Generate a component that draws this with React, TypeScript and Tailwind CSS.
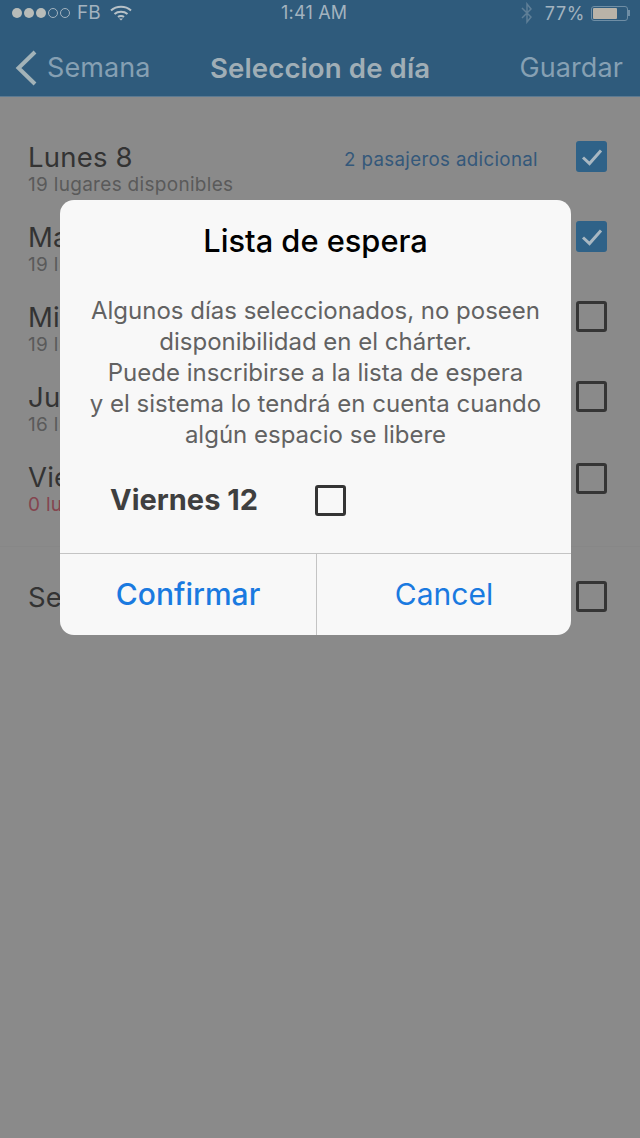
const sans = "font-['Inter','Liberation_Sans',sans-serif]";

function Box({ checked = false, className = "" }: { checked?: boolean; className?: string }) {
  return checked ? (
    <div className={`w-[31px] h-[31px] rounded-[3px] bg-[#2f6288] flex items-center justify-center ${className}`}>
      <svg width="24" height="20" viewBox="0 0 24 20" fill="none">
        <path d="M3 10.5 L9.5 16.5 L21 3.5" stroke="#a9b8c2" strokeWidth="3" />
      </svg>
    </div>
  ) : (
    <div className={`w-[31px] h-[31px] rounded-[3px] border-[3px] border-[#353535] ${className}`} />
  );
}

function Row({
  title,
  sub,
  extra,
  checked,
  red,
}: {
  title: string;
  sub: string;
  extra?: string;
  checked?: boolean;
  red?: boolean;
}) {
  return (
    <div className="h-20 flex items-start pl-7 pr-[33px]">
      <div className="flex-1 min-w-0">
        <div className="text-[27.5px] leading-[32px] text-[#333333] tracking-[0.2px]">{title}</div>
        <div className={`text-[19px] leading-[22px] tracking-[0.3px] mt-[1px] ${red ? "text-[#84454f]" : "text-[#5a5a5a]"}`}>{sub}</div>
      </div>
      {extra && <div className="text-[18.7px] leading-[32px] mt-[3px] mr-[38px] tracking-[0.35px] text-[#34587a]">{extra}</div>}
      <Box checked={checked} className={red ? "mt-[2px]" : ""} />
    </div>
  );
}

export default function App() {
  return (
    <div className={`relative w-[640px] h-[1138px] overflow-hidden bg-[#8a8a8a] ${sans}`}>
      <header className="h-[97px] bg-[#2f5b7c] border-b border-[#5c7a92]">
        <div className="h-[26px] relative flex items-center justify-between pl-[12px] pr-[10px] text-[#a3b3bf] text-[18px]">
          <div className="flex items-center">
            <div className="flex gap-[2px] items-center">
              <span className="w-[10px] h-[10px] rounded-full bg-[#b8bcb9]" />
              <span className="w-[10px] h-[10px] rounded-full bg-[#b8bcb9]" />
              <span className="w-[10px] h-[10px] rounded-full bg-[#b8bcb9]" />
              <span className="w-[10px] h-[10px] rounded-full border border-[#a3b3bf]" />
              <span className="w-[10px] h-[10px] rounded-full border border-[#a3b3bf]" />
            </div>
            <span className="ml-[7px] text-[19px]">FB</span>
            <svg className="ml-[9px]" width="22" height="16" viewBox="0 0 22 16" fill="none" stroke="#b8c2c8" strokeWidth="2">
              <path d="M1 5.5 C6.5 0.5 15.5 0.5 21 5.5" />
              <path d="M4.5 9 C8 6 14 6 17.5 9" />
              <path d="M8 12 C9.5 10.8 12.5 10.8 14 12" />
              <path d="M11 15.5 L9 13.5 H13 Z" fill="#b8c2c8" stroke="none" />
            </svg>
          </div>
          <span className="absolute left-[281px] top-[1px] text-[18px] leading-[24px] tracking-[0.2px]">1:41 AM</span>
          <div className="flex items-center">
            <svg width="12" height="22" viewBox="0 0 12 22" fill="none" stroke="#5f7f97" strokeWidth="1.5">
              <path d="M1 6 L10 15 L6 20 V2 L10 7 L1 16" />
            </svg>
            <span className="ml-[12px] text-[18px] tracking-[0.6px]">77%</span>
            <div className="ml-[6px] w-[37px] h-[15px] rounded-[3px] border border-[#6f8ea5] p-[1px]">
              <div className="w-[24px] h-full rounded-[1px] bg-[#b9b3a8]" />
            </div>
            <div className="w-[2px] h-[6px] bg-[#6f8ea5]" />
          </div>
        </div>
        <div className="h-[70px] pt-[14px] relative flex items-center justify-between pl-[15px] pr-[17px] text-[27px]">
          <div className="flex items-center">
            <svg width="22" height="36" viewBox="0 0 22 36" fill="none" stroke="#a3b3b8" strokeWidth="4">
              <path d="M20 2 L3.5 18 L20 34" />
            </svg>
            <span className="ml-[10px] text-[#86a0b3] tracking-[0.1px]">Semana</span>
          </div>
          <span className="absolute left-[210px] top-[26px] leading-[32px] text-[27.6px] font-semibold text-[#a0aeb6] tracking-[0.1px]">Seleccion de día</span>
          <span className="text-[#86a0b3] tracking-[0.1px]">Guardar</span>
        </div>
      </header>

      <main className="pt-[44px]">
        <Row title="Lunes 8" sub="19 lugares disponibles" extra="2 pasajeros adicional" checked />
        <Row title="Martes 9" sub="19 lugares disponibles" checked />
        <Row title="Miércoles 10" sub="19 lugares disponibles" />
        <Row title="Jueves 11" sub="16 lugares disponibles" />
        <Row title="Viernes 12" sub="0 lugares disponibles" red />
        <div className="h-px bg-[#878787] mt-[5px] mb-[34px]" />
        <Row title="Semana completa" sub="" />
      </main>

      <div className="absolute left-[60px] top-[200px] w-[511px] h-[435px] rounded-[14px] bg-[#f8f8f8] flex flex-col overflow-hidden">
        <h1 className="mt-[20px] text-center text-[30.8px] leading-[42px] font-medium text-black">Lista de espera</h1>
        <p className="mt-[33px] text-center text-[24px] leading-[31px] text-[#626262]">
          Algunos días seleccionados, no poseen
          <br />
          disponibilidad en el chárter.
          <br />
          Puede inscribirse a la lista de espera
          <br />
          y el sistema lo tendrá en cuenta cuando
          <br />
          algún espacio se libere
        </p>
        <div className="flex-1 flex items-center pl-[50px] pb-[3px]">
          <span className="w-[205px] text-[29px] font-bold text-[#3f3f3f]">Viernes 12</span>
          <Box />
        </div>
        <div className="h-[82px] flex border-t border-[#c4c4c4] text-[30px] text-[#1a7ae0]">
          <div className="w-[257px] flex items-center justify-center font-medium border-r border-[#c4c4c4]">Confirmar</div>
          <div className="flex-1 flex items-center justify-center">Cancel</div>
        </div>
      </div>
    </div>
  );
}
